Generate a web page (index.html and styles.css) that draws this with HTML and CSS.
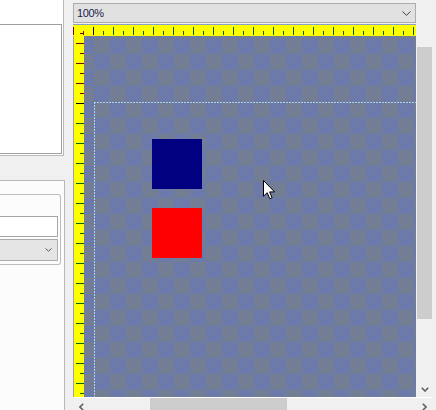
FILE: index.html
```html
<!DOCTYPE html>
<html>
<head>
<meta charset="utf-8">
<link rel="stylesheet" href="styles.css">
</head>
<body>
<div class="app">
  <aside class="side">
    <div class="panel-top"><div class="list"></div></div>
    <div class="panel-bottom">
      <div class="group">
        <div class="textbox"></div>
        <div class="combo-s">
          <svg width="7" height="4" viewBox="0 0 7 4"><path d="M0.5 0.5 L3.5 3.2 L6.5 0.5" fill="none" stroke="#555" stroke-width="1"/></svg>
        </div>
      </div>
    </div>
  </aside>
  <div class="splitter"></div>
  <main class="main">
    <div class="zoom-combo">
      <span class="zoom-text">100%</span>
      <svg width="9" height="5" viewBox="0 0 9 5"><path d="M0.5 0.5 L4.5 4.3 L8.5 0.5" fill="none" stroke="#404040" stroke-width="1"/></svg>
    </div>
    <div class="viewport">
      <div class="view-col">
        <div class="ruler-top">
          <svg width="343" height="11" viewBox="0 0 343 11">
            <defs>
              <pattern id="tr" width="20" height="11" patternUnits="userSpaceOnUse"><rect x="0" y="2" width="1" height="8" fill="#800000"/><rect x="10" y="6" width="1" height="4" fill="#800000"/></pattern>
              <pattern id="tg" width="20" height="11" patternUnits="userSpaceOnUse"><rect x="0" y="2" width="1" height="8" fill="#006400"/><rect x="10" y="6" width="1" height="4" fill="#006400"/></pattern>
            </defs>
            <rect x="0" y="0" width="12" height="11" fill="url(#tr)"/>
            <rect x="20" y="2" width="1" height="8" fill="#000"/>
            <rect x="25" y="0" width="318" height="11" fill="url(#tg)"/>
            <rect x="7" y="8" width="4" height="1" fill="#800000"/>
          </svg>
        </div>
        <div class="view-body">
          <div class="ruler-left">
            <svg width="10" height="361" viewBox="0 0 10 361">
              <defs>
                <pattern id="lr" width="10" height="20" patternUnits="userSpaceOnUse"><rect x="2" y="7" width="8" height="1" fill="#800000"/><rect x="6" y="17" width="4" height="1" fill="#800000"/></pattern>
                <pattern id="lg" width="10" height="20" patternUnits="userSpaceOnUse"><rect x="2" y="7" width="8" height="1" fill="#006400"/><rect x="6" y="17" width="4" height="1" fill="#006400"/></pattern>
              </defs>
              <rect x="0" y="0" width="10" height="60" fill="url(#lr)"/>
              <rect x="2" y="67" width="8" height="1" fill="#000"/>
              <rect x="0" y="72" width="10" height="289" fill="url(#lg)"/>
            </svg>
          </div>
          <div class="canvas">
            <svg class="checker" width="332" height="361" viewBox="0 0 332 361">
              <defs>
                <pattern id="chk" x="10" y="2" width="32" height="32" patternUnits="userSpaceOnUse">
                  <rect x="0" y="0" width="32" height="32" fill="#6c7aa9"/>
                  <rect x="0" y="0" width="16" height="16" fill="#737d94"/>
                  <rect x="16" y="16" width="16" height="16" fill="#737d94"/>
                </pattern>
              </defs>
              <rect x="0" y="0" width="332" height="361" fill="url(#chk)"/>
            </svg>
            <div class="page"></div>
            <div class="shape shape-navy"></div>
            <div class="shape shape-red"></div>
            <svg class="cursor" width="13" height="20" viewBox="0 0 13 20"><path d="M0.5 0.5 V16.2 L4.2 12.7 L6.8 18.7 L9.1 17.7 L6.6 11.9 H11.6 Z" fill="#fff" stroke="#000" stroke-width="1" stroke-linejoin="miter"/></svg>
          </div>
        </div>
      </div>
      <div class="vscroll">
        <div class="vthumb"></div>
        <div class="arrow-btn down">
          <svg width="8" height="5" viewBox="0 0 8 5"><path d="M0.8 0.8 L4 4 L7.2 0.8" fill="none" stroke="#606060" stroke-width="1.6"/></svg>
        </div>
      </div>
    </div>
    <div class="hscroll">
      <div class="arrow-btn">
        <svg width="5" height="8" viewBox="0 0 5 8"><path d="M4.2 0.8 L1 4 L4.2 7.2" fill="none" stroke="#606060" stroke-width="1.6"/></svg>
      </div>
      <div class="htrack"><div class="hthumb"></div></div>
      <div class="arrow-btn">
        <svg width="5" height="8" viewBox="0 0 5 8"><path d="M0.8 0.8 L4 4 L0.8 7.2" fill="none" stroke="#606060" stroke-width="1.6"/></svg>
      </div>
    </div>
  </main>
</div>
</body>
</html>
```
FILE: styles.css
```css
* { box-sizing: border-box; }

body {
  margin: 0;
  width: 436px;
  height: 410px;
  overflow: hidden;
  background: #f0f0f0;
  font-family: "Liberation Sans", Arial, sans-serif;
}

.app {
  display: flex;
  height: 410px;
}

.side {
  width: 65px;
  flex: none;
  display: flex;
  flex-direction: column;
}

.panel-top {
  flex: none;
  width: 64px;
  height: 156px;
  padding-top: 24px;
  background: #fff;
  border-right: 1px solid #b9b9b9;
  border-bottom: 1px solid #b9b9b9;
}

.list {
  width: 62px;
  height: 130px;
  background: #fff;
  border: 1px solid #a0a0a0;
  border-left: none;
}

.panel-bottom {
  margin-top: 24px;
  width: 65px;
  flex: 1;
  padding-top: 13px;
  background: #fcfcfc;
  border-top: 1px solid #b9b9b9;
  border-right: 1px solid #b9b9b9;
}

.group {
  width: 61px;
  height: 71px;
  padding-top: 21px;
  border: 1px solid #bcbcbc;
  border-left: none;
  border-radius: 0 3px 3px 0;
}

.textbox {
  width: 58px;
  height: 21px;
  background: #fff;
  border: 1px solid #a5a5a5;
  border-left: none;
}

.combo-s {
  margin-top: 2px;
  width: 58px;
  height: 22px;
  background: #e5e5e5;
  border: 1px solid #adadad;
  border-left: none;
  display: flex;
  align-items: center;
  justify-content: flex-end;
  padding-right: 5px;
}

.combo-s svg { display: block; }

.splitter {
  width: 8px;
  flex: none;
}

.main {
  width: 363px;
  flex: none;
  display: flex;
  flex-direction: column;
}

.main > * { flex: none; }

.zoom-combo {
  margin-top: 3px;
  width: 343px;
  height: 20px;
  padding: 0 4px 0 3px;
  background: #e1e1e1;
  border: 1px solid #adadad;
  display: flex;
  align-items: center;
  justify-content: space-between;
}

.zoom-text {
  font-size: 11px;
  letter-spacing: -0.4px;
  color: #1c1c4c;
}

.zoom-combo svg { display: block; }

.viewport {
  margin-top: 1px;
  height: 373px;
  display: flex;
}

.view-col {
  width: 343px;
  display: flex;
  flex-direction: column;
}

.view-col > * { flex: none; }

.ruler-top {
  height: 12px;
  background: #ffff00;
  border-top: 1px solid #8aa0c4;
}

.ruler-top svg,
.ruler-left svg { display: block; }

.view-body {
  height: 361px;
  display: flex;
}

.ruler-left {
  flex: none;
  width: 11px;
  background: #ffff00;
  border-left: 1px solid #a0a0a0;
}

.canvas {
  flex: none;
  width: 332px;
  height: 361px;
  position: relative;
  overflow: hidden;
  background: #6c7aa9;
}

.checker {
  display: block;
}

.page {
  position: absolute;
  left: 10px;
  top: 66px;
  right: -10px;
  bottom: -10px;
  background-image:
    repeating-linear-gradient(to right, #a8d2f0 0 2px, transparent 2px 3px),
    repeating-linear-gradient(to bottom, #a8d2f0 0 2px, transparent 2px 3px);
  background-size: 100% 1px, 1px 100%;
  background-repeat: no-repeat;
}

.shape {
  position: absolute;
  width: 50px;
  height: 50px;
}

.shape-navy {
  left: 68px;
  top: 103px;
  background: #000080;
}

.shape-red {
  left: 68px;
  top: 172px;
  background: #ff0000;
}

.cursor {
  position: absolute;
  left: 179px;
  top: 144px;
}

.vscroll {
  flex: none;
  width: 17px;
  padding-top: 23px;
  display: flex;
  flex-direction: column;
}

.vthumb {
  flex: none;
  margin-left: 1px;
  width: 15px;
  height: 272px;
  background: #cdcdcd;
}

.arrow-btn {
  width: 17px;
  height: 17px;
  flex: none;
  display: flex;
  align-items: center;
  justify-content: center;
}

.arrow-btn svg { display: block; }

.arrow-btn.down {
  margin-top: auto;
  height: 16px;
}

.hscroll {
  width: 360px;
  height: 18px;
  border-top: 1px solid #fff;
  display: flex;
}

.htrack {
  flex: 1;
  padding-left: 60px;
}

.hthumb {
  width: 137px;
  height: 100%;
  background: #cdcdcd;
}
```
